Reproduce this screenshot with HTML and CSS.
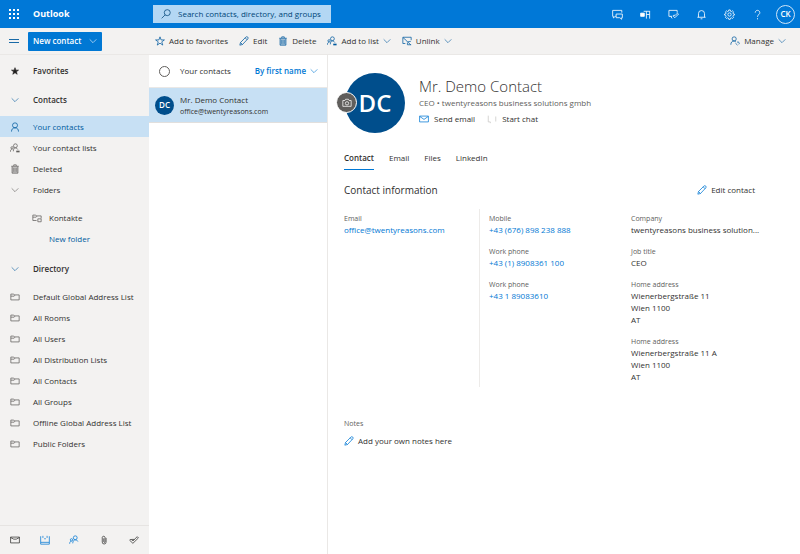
FILE: index.html
```html
<!DOCTYPE html>
<html lang="en">
<head>
  <meta charset="UTF-8">
  <title>Outlook - Contacts</title>
  <link rel="stylesheet" href="styles.css">
</head>
<body>

  <svg class="sprite" aria-hidden="true">
    <symbol id="i-waffle" viewBox="0 0 10 10"><path fill="currentColor" d="M0 0h2v2H0zM4 0h2v2H4zM8 0h2v2H8zM0 4h2v2H0zM4 4h2v2H4zM8 4h2v2H8zM0 8h2v2H0zM4 8h2v2H4zM8 8h2v2H8z"/></symbol>
    <symbol id="i-search" viewBox="0 0 12 12"><circle cx="7.5" cy="4.400" r="3.600"/><path d="M5 7 .8 11.200"/></symbol>
    <symbol id="i-chat" viewBox="0 0 12 12"><path d="M4.500 8H3.500L1.500 9.800V8H.7V1.500h10V4"/><path d="M4.500 5.500h6.800v4h-.8v1.700L8.500 9.500h-4z"/></symbol>
    <symbol id="i-teams" viewBox="0 0 12 12"><path fill="currentColor" d="M.7 4.500h4v3.500h-4z"/><path d="M4 2.500h7M7 2.500v8M10.500 2.500v8M7 6h3.500"/></symbol>
    <symbol id="i-task" viewBox="0 0 12 12"><path d="M4.500 8H1V1.500h9V4M3 8l1.500 2.300M5.500 7.500 7.500 9.500 11.500 5.500 10.300 4.500 7.500 7.300 6.500 6.400z"/></symbol>
    <symbol id="i-bell" viewBox="0 0 12 12"><path d="M1.500 9h9M2.700 9V5a3.300 3.300 0 0 1 6.600 0v4M5 10.700h2"/></symbol>
    <symbol id="i-gear" viewBox="0 0 12 12"><circle cx="6" cy="6" r="1.800"/><path d="M5.200 1h1.600l.3 1.400 1 .4 1.200-.8 1.100 1.100-.7 1.200.4 1 1.300.3v1l-1.300.4-.4 1 .7 1.200-1.100 1.100-1.200-.7-1 .4-.3 1.300H5.200l-.3-1.300-1-.4-1.200.7-1.100-1.100.7-1.200-.4-1L.6 6.600v-1l1.300-.3.4-1-.7-1.200L2.700 2l1.200.8 1-.4z"/></symbol>
    <symbol id="i-help" viewBox="0 0 12 12"><path d="M3.500 4a2.500 2.500 0 1 1 4 2C6.500 6.800 6 7.200 6 8.500M6 10v1.300"/></symbol>
    <symbol id="i-menu" viewBox="0 0 12 12"><path d="M1 4.500h10M1 7.500h10"/></symbol>
    <symbol id="i-down" viewBox="0 0 12 12"><path d="m1 3.500 5 5 5-5"/></symbol>
    <symbol id="i-star" viewBox="0 0 12 12"><path d="m6 1 1.300 3.700h4L8.100 7l1.200 3.900L6 8.600l-3.300 2.300L3.900 7 .7 4.700h4z"/></symbol>
    <symbol id="i-pencil" viewBox="0 0 12 12"><path d="m1 11 .8-3.200L8.300 1.300a1.400 1.400 0 0 1 2.200 2.200L4.200 10.200zM1.800 7.800l2.400 2.400M7.400 2.200l2.300 2.300"/></symbol>
    <symbol id="i-trash" viewBox="0 0 12 12"><path class="shade" d="M2.500 3h7v8h-7z"/><path d="M1.500 2.700h9M4.500 2.500V1h3v1.500M2.500 3v8h7V3M4.700 4.500v5M7.300 4.500v5"/></symbol>
    <symbol id="i-person" viewBox="0 0 12 12"><circle cx="6" cy="4" r="3"/><path d="M1.800 11.500c0-2.800 1.500-4.500 4.200-4.500s4.200 1.700 4.200 4.500"/></symbol>
    <symbol id="i-people" viewBox="0 0 12 12"><circle cx="7.500" cy="3.300" r="2.300"/><circle cx="3" cy="5.800" r="1.400"/><path d="M.8 10.500c0-2 .8-3.100 2.200-3.100M4.500 10c0-2.500 1-4.100 3-4.100s3 1 3.200 2"/></symbol>
    <symbol id="i-people-list" viewBox="0 0 12 12"><circle cx="6.500" cy="3.300" r="2.300"/><circle cx="2.500" cy="5.800" r="1.400"/><path d="M.5 10.500c0-2 .8-3.100 2-3.100M4 10c0-2.500 1-4.100 2.500-4.100s2.500 1 2.900 2"/><path stroke-width="2" d="M7.500 10.200h4"/></symbol>
    <symbol id="i-link" viewBox="0 0 12 12"><path d="M4 9H1V1.500h10V5M1.300 2l4 3.500M5 5.500l5.500 5M10.500 6.500 7 7M6.500 8v2.500H11"/></symbol>
    <symbol id="i-manage" viewBox="0 0 12 12"><circle cx="5" cy="3.500" r="2.500"/><path d="M1 10.500C1 7.500 2.500 6 5 6c1 0 1.700.3 2.200.8M6.500 8.500 9 11M8.500 7.500a1.600 1.600 0 1 1 2 2.500"/></symbol>
    <symbol id="i-folder" viewBox="0 0 12 12"><path d="M1 2.500h3.500l1 1H11v6H1zM1 5h4l1-1.300"/></symbol>
    <symbol id="i-subfolder" viewBox="0 0 12 12"><path d="M5.500 9H1V2.500h3.500l1 1H11v3M1 5h4l1-1.300M7 7h4v3.500H7z"/></symbol>
    <symbol id="i-mail" viewBox="0 0 12 12"><path d="M.7 2.500h10.600v7H.7zM1 3 6 6.500 11 3"/></symbol>
    <symbol id="i-inbox" viewBox="0 0 12 12"><path d="M.7 2.500h10.600v7H.7zM.7 3 4.500 5h3L11.300 3"/></symbol>
    <symbol id="i-calendar" viewBox="0 0 12 12"><path d="M.8 1.500V11h10.400V1.500M3.500 1v2.500M8.500 1v2.500M1 8.800h10M5 4.500h2"/></symbol>
    <symbol id="i-clip" viewBox="0 0 12 12"><path d="M8.500 3.500v5a2.300 2.300 0 0 1-4.600 0V2.800a1.700 1.700 0 0 1 3.300 0v5.500a.8.800 0 0 1-1.500 0V4"/></symbol>
    <symbol id="i-todo" viewBox="0 0 12 12"><path d="M.8 6.300 2.300 4.800 4.700 7.200 9.800 2 11.300 3.500 4.700 10zM3.300 5.300h3"/></symbol>
    <symbol id="i-camera" viewBox="0 0 12 12"><path d="M1 3h2.500l.8-1.500h3.400L8.500 3H11v7H1z"/><circle cx="6" cy="6.400" r="2"/></symbol>
    <symbol id="i-bubble" viewBox="0 0 12 12"><path d="M1.500 2v7.500H4V11M10.500 3v6"/></symbol>
  </svg>

  <header class="topbar">
    <button class="icon-btn waffle" aria-label="App launcher"><svg class="icon"><use href="#i-waffle"/></svg></button>
    <a class="brand" href="#">Outlook</a>
    <label class="search">
      <svg class="icon"><use href="#i-search"/></svg>
      <input type="search" placeholder="Search contacts, directory, and groups" aria-label="Search">
    </label>
    <div class="top-actions">
      <button class="icon-btn" aria-label="Chat"><svg class="icon"><use href="#i-chat"/></svg></button>
      <button class="icon-btn" aria-label="Teams"><svg class="icon"><use href="#i-teams"/></svg></button>
      <button class="icon-btn" aria-label="Tasks"><svg class="icon"><use href="#i-task"/></svg></button>
      <button class="icon-btn" aria-label="Notifications"><svg class="icon"><use href="#i-bell"/></svg></button>
      <button class="icon-btn" aria-label="Settings"><svg class="icon"><use href="#i-gear"/></svg></button>
      <button class="icon-btn" aria-label="Help"><svg class="icon"><use href="#i-help"/></svg></button>
      <button class="account">CK</button>
    </div>
  </header>

  <div class="commandbar">
    <div class="command-left">
      <button class="icon-btn" aria-label="Toggle menu"><svg class="icon large"><use href="#i-menu"/></svg></button>
      <button class="new-contact">New contact <svg class="icon small"><use href="#i-down"/></svg></button>
    </div>
    <div class="commands">
      <button class="command"><svg class="icon"><use href="#i-star"/></svg>Add to favorites</button>
      <button class="command"><svg class="icon"><use href="#i-pencil"/></svg>Edit</button>
      <button class="command"><svg class="icon"><use href="#i-trash"/></svg>Delete</button>
      <button class="command"><svg class="icon"><use href="#i-people-list"/></svg>Add to list<svg class="icon small"><use href="#i-down"/></svg></button>
      <button class="command"><svg class="icon"><use href="#i-link"/></svg>Unlink<svg class="icon small"><use href="#i-down"/></svg></button>
      <button class="command manage"><svg class="icon"><use href="#i-manage"/></svg>Manage<svg class="icon small"><use href="#i-down"/></svg></button>
    </div>
  </div>

  <div class="layout">
    <nav class="sidebar">
      <div class="tree">
        <a class="group" href="#"><svg class="icon small filled"><use href="#i-star"/></svg>Favorites</a>
        <a class="group" href="#"><svg class="icon small"><use href="#i-down"/></svg>Contacts</a>
        <a class="item active" href="#"><svg class="icon"><use href="#i-person"/></svg>Your contacts</a>
        <a class="item" href="#"><svg class="icon"><use href="#i-people-list"/></svg>Your contact lists</a>
        <a class="item" href="#"><svg class="icon"><use href="#i-trash"/></svg>Deleted</a>
        <a class="item" href="#"><svg class="icon small"><use href="#i-down"/></svg>Folders</a>
        <div class="subfolders">
          <a class="item" href="#"><svg class="icon"><use href="#i-subfolder"/></svg>Kontakte</a>
          <a class="item new-folder" href="#">New folder</a>
        </div>
        <a class="group directory" href="#"><svg class="icon small"><use href="#i-down"/></svg>Directory</a>
        <a class="item" href="#"><svg class="icon"><use href="#i-folder"/></svg>Default Global Address List</a>
        <a class="item" href="#"><svg class="icon"><use href="#i-folder"/></svg>All Rooms</a>
        <a class="item" href="#"><svg class="icon"><use href="#i-folder"/></svg>All Users</a>
        <a class="item" href="#"><svg class="icon"><use href="#i-folder"/></svg>All Distribution Lists</a>
        <a class="item" href="#"><svg class="icon"><use href="#i-folder"/></svg>All Contacts</a>
        <a class="item" href="#"><svg class="icon"><use href="#i-folder"/></svg>All Groups</a>
        <a class="item" href="#"><svg class="icon"><use href="#i-folder"/></svg>Offline Global Address List</a>
        <a class="item" href="#"><svg class="icon"><use href="#i-folder"/></svg>Public Folders</a>
      </div>
      <div class="modules">
        <a href="#" aria-label="Mail"><svg class="icon"><use href="#i-inbox"/></svg></a>
        <a class="blue" href="#" aria-label="Calendar"><svg class="icon"><use href="#i-calendar"/></svg></a>
        <a class="blue" href="#" aria-label="People"><svg class="icon"><use href="#i-people"/></svg></a>
        <a href="#" aria-label="Files"><svg class="icon"><use href="#i-clip"/></svg></a>
        <a href="#" aria-label="To Do"><svg class="icon"><use href="#i-todo"/></svg></a>
      </div>
    </nav>

    <section class="list">
      <div class="list-header">
        <input type="checkbox" id="selectAll">
        <label for="selectAll">Your contacts</label>
        <button class="sort">By first name<svg class="icon small"><use href="#i-down"/></svg></button>
      </div>
      <a class="contact-row" href="#">
        <span class="avatar">DC</span>
        <span class="contact-text">
          <span class="contact-name">Mr. Demo Contact</span>
          <span class="contact-mail">office@twentyreasons.com</span>
        </span>
      </a>
    </section>

    <main class="detail">
      <div class="profile">
        <div class="photo">DC
          <button class="camera" aria-label="Change photo"><svg class="icon"><use href="#i-camera"/></svg></button>
        </div>
        <div class="profile-text">
          <h1>Mr. Demo Contact</h1>
          <p>CEO • twentyreasons business solutions gmbh</p>
          <div class="profile-actions">
            <button><svg class="icon mail"><use href="#i-mail"/></svg>Send email</button>
            <button><svg class="icon bubble"><use href="#i-bubble"/></svg>Start chat</button>
          </div>
        </div>
      </div>

      <div class="tabs">
        <button class="tab selected">Contact</button>
        <button class="tab">Email</button>
        <button class="tab">Files</button>
        <button class="tab">LinkedIn</button>
      </div>

      <div class="info-header">
        <h2>Contact information</h2>
        <button><svg class="icon"><use href="#i-pencil"/></svg>Edit contact</button>
      </div>

      <div class="info">
        <dl>
          <dt>Email</dt>
          <dd><a href="#">office@twentyreasons.com</a></dd>
        </dl>
        <dl class="phones">
          <dt>Mobile</dt>
          <dd><a href="#">+43 (676) 898 238 888</a></dd>
          <dt>Work phone</dt>
          <dd><a href="#">+43 (1) 8908361 100</a></dd>
          <dt>Work phone</dt>
          <dd><a href="#">+43 1 89083610</a></dd>
        </dl>
        <dl>
          <dt>Company</dt>
          <dd class="company">twentyreasons business solution...</dd>
          <dt>Job title</dt>
          <dd>CEO</dd>
          <dt>Home address</dt>
          <dd>Wienerbergstraße 11<br>Wien 1100<br>AT</dd>
          <dt>Home address</dt>
          <dd>Wienerbergstraße 11 A<br>Wien 1100<br>AT</dd>
        </dl>
      </div>

      <div class="notes">
        <h3>Notes</h3>
        <button><svg class="icon"><use href="#i-pencil"/></svg>Add your own notes here</button>
      </div>
    </main>
  </div>

</body>
</html>
```
FILE: styles.css
```css
* {
  box-sizing: border-box;
}

body {
  margin: 0;
  min-height: 100vh;
  display: flex;
  flex-direction: column;
  font-family: 'Open Sans', 'Noto Sans', sans-serif;
  font-size: 8px;
  line-height: 12px;
  color: #323130;
  background: #fff;
}

button,
input {
  font: inherit;
  color: inherit;
}

button {
  display: flex;
  align-items: center;
  padding: 0;
  border: none;
  background: none;
  white-space: nowrap;
  cursor: pointer;
}

a {
  color: inherit;
  text-decoration: none;
}

h1, h2, h3, p, dl, dd {
  margin: 0;
}

.sprite {
  display: none;
}

.icon {
  width: 10px;
  height: 10px;
  flex: none;
  fill: none;
  stroke: currentColor;
  stroke-width: 0.9;
}

.icon.small {
  width: 8px;
  height: 8px;
}

.icon.large {
  width: 12px;
  height: 12px;
}

/* Top bar */

.topbar {
  height: 28px;
  display: flex;
  align-items: center;
  background: #0078d7;
  color: #fff;
}

.icon-btn {
  width: 28px;
  height: 28px;
  justify-content: center;
}

.waffle .icon {
  stroke: none;
}

.brand {
  width: 120px;
  margin-left: 5px;
  font-size: 9px;
  font-weight: 700;
}

.search {
  width: 178px;
  height: 18px;
  display: flex;
  align-items: center;
  gap: 7px;
  padding-left: 8px;
  background: #b3d7f4;
  color: #004578;
}

.search input {
  flex: 1;
  min-width: 0;
  padding: 0;
  border: none;
  outline: none;
  background: none;
}

.search input::placeholder {
  color: #004578;
  opacity: 1;
}

.top-actions {
  display: flex;
  align-items: center;
  margin-left: auto;
  padding-right: 5px;
}

.top-actions .icon {
  width: 11px;
  height: 11px;
}

.account {
  width: 19px;
  height: 19px;
  margin-left: 5px;
  justify-content: center;
  border: 1px solid #cfe5f8;
  border-radius: 50%;
  font-weight: 600;
}

/* Command bar */

.commandbar {
  height: 27px;
  display: flex;
  align-items: center;
  background: #f3f2f1;
  border-bottom: 1px solid #eae8e6;
}

.command-left {
  width: 149px;
  flex: none;
  display: flex;
  align-items: center;
}

.command-left .icon-btn {
  color: #005a9e;
}

.new-contact {
  width: 74px;
  height: 19px;
  justify-content: space-between;
  padding: 0 5px;
  border-radius: 1px;
  background: #0078d4;
  color: #fff;
  font-weight: 600;
}

.commands {
  flex: 1;
  display: flex;
  align-items: center;
  gap: 11px;
  padding: 0 14px 0 6px;
}

.command {
  gap: 4px;
}

.command .icon {
  color: #005a9e;
}

.manage {
  margin-left: auto;
}

.shade {
  fill: currentColor;
  opacity: 0.3;
  stroke: none;
}

/* Columns */

.layout {
  flex: 1;
  display: flex;
}

.sidebar {
  width: 149px;
  flex: none;
  display: flex;
  flex-direction: column;
  background: #f3f2f1;
}

.tree {
  flex: 1;
  padding-top: 5px;
}

.group,
.item {
  height: 21px;
  display: flex;
  align-items: center;
  gap: 13px;
  padding-left: 10px;
  white-space: nowrap;
}

.group {
  font-weight: 600;
}

.group + .group {
  margin-top: 8px;
}

.group + .item {
  margin-top: 6px;
}

.group .small,
.item .small {
  margin: 0 1px;
}

.group .small {
  color: #005a9e;
}

.group .filled {
  fill: currentColor;
  color: #201f1e;
}

.item .icon {
  color: #605e5c;
}

.item.active,
.item.active .icon {
  color: #005a9e;
}

.item.active {
  background: #c7e0f4;
}

.subfolders {
  padding: 7px 0 0 22px;
}

.subfolders .item {
  gap: 7px;
}

.subfolders .new-folder {
  padding-left: 27px;
  color: #005a9e;
}

.group.directory {
  margin-top: 9px;
}

.directory + .item {
  margin-top: 7px;
}

.modules {
  height: 29px;
  display: flex;
  align-items: center;
  justify-content: space-around;
  border-top: 1px solid #e6e4e2;
}

.modules a {
  display: flex;
}

.modules .blue {
  color: #0078d4;
}

/* Contact list */

.list {
  width: 179px;
  flex: none;
  border-right: 1px solid #eae8e6;
}

.list-header {
  height: 33px;
  display: flex;
  align-items: center;
  padding: 0 9px 0 10px;
  border-bottom: 1px solid #eae8e6;
}

.list-header input {
  appearance: none;
  width: 11px;
  height: 11px;
  margin: 0 10px 0 0;
  border: 1px solid #605e5c;
  border-radius: 50%;
}

.sort {
  margin-left: auto;
  gap: 4px;
  color: #0078d4;
  font-weight: 600;
}

.contact-row {
  height: 35px;
  display: flex;
  align-items: center;
  gap: 6px;
  padding-left: 6px;
  background: #c7e0f4;
  border-bottom: 1px solid #e1dfdd;
}

.avatar {
  width: 19px;
  height: 19px;
  display: flex;
  align-items: center;
  justify-content: center;
  border-radius: 50%;
  background: #004e8c;
  color: #fff;
  font-weight: 600;
}

.contact-text {
  display: flex;
  flex-direction: column;
}

.contact-mail {
  font-size: 7px;
  line-height: 11px;
}

/* Contact details */

.detail {
  flex: 1;
  min-width: 0;
  padding: 18px 45px 0 16px;
}

.profile {
  display: flex;
  gap: 14px;
}

.photo {
  position: relative;
  width: 60px;
  height: 60px;
  margin-left: 1px;
  display: flex;
  align-items: center;
  justify-content: center;
  border-radius: 50%;
  background: #004e8c;
  color: #fff;
  font-size: 24px;
  font-weight: 600;
}

.camera {
  position: absolute;
  left: -9px;
  top: 19px;
  width: 21px;
  height: 21px;
  justify-content: center;
  border: 1px solid #fff;
  border-radius: 50%;
  background: #605e5c;
}

.profile h1 {
  padding-top: 3px;
  font-size: 15px;
  line-height: 20px;
  font-weight: 300;
}

.profile p {
  line-height: 14px;
  color: #605e5c;
}

.profile-actions {
  display: flex;
  gap: 12px;
  padding-top: 3px;
}

.profile-actions button {
  gap: 5px;
}

.profile-actions .mail {
  color: #0078d4;
}

.profile-actions .bubble {
  color: #c8c6c4;
}

.tabs {
  display: flex;
  gap: 15px;
  margin-top: 13px;
}

.tab {
  height: 24px;
  border-bottom: 1px solid transparent;
}

.tab.selected {
  border-color: #0078d4;
  font-weight: 600;
}

.info-header {
  display: flex;
  align-items: center;
  justify-content: space-between;
  margin: 13px 0 12px;
}

.info-header h2 {
  font-size: 10px;
  line-height: 14px;
  font-weight: 400;
}

.info-header button,
.notes button {
  gap: 4px;
}

.info-header .icon,
.notes .icon {
  color: #0078d4;
}

.info {
  display: grid;
  grid-template-columns: 135fr 152fr 124fr;
}

.info dl {
  min-width: 0;
  min-height: 178px;
  padding-top: 5px;
}

.info .phones {
  padding-left: 9px;
  border-left: 1px solid #edebe9;
}

.info dt {
  font-size: 7px;
  line-height: 10px;
  color: #605e5c;
}

.info dd {
  padding-bottom: 11px;
}

.info dd:last-child {
  padding-bottom: 0;
}

.info .company {
  white-space: nowrap;
}

.info a {
  color: #0078d4;
}

.notes {
  padding-top: 31px;
}

.notes h3 {
  font-size: 7px;
  line-height: 12px;
  font-weight: 400;
  color: #605e5c;
}

.notes button {
  padding-top: 5px;
}
```
